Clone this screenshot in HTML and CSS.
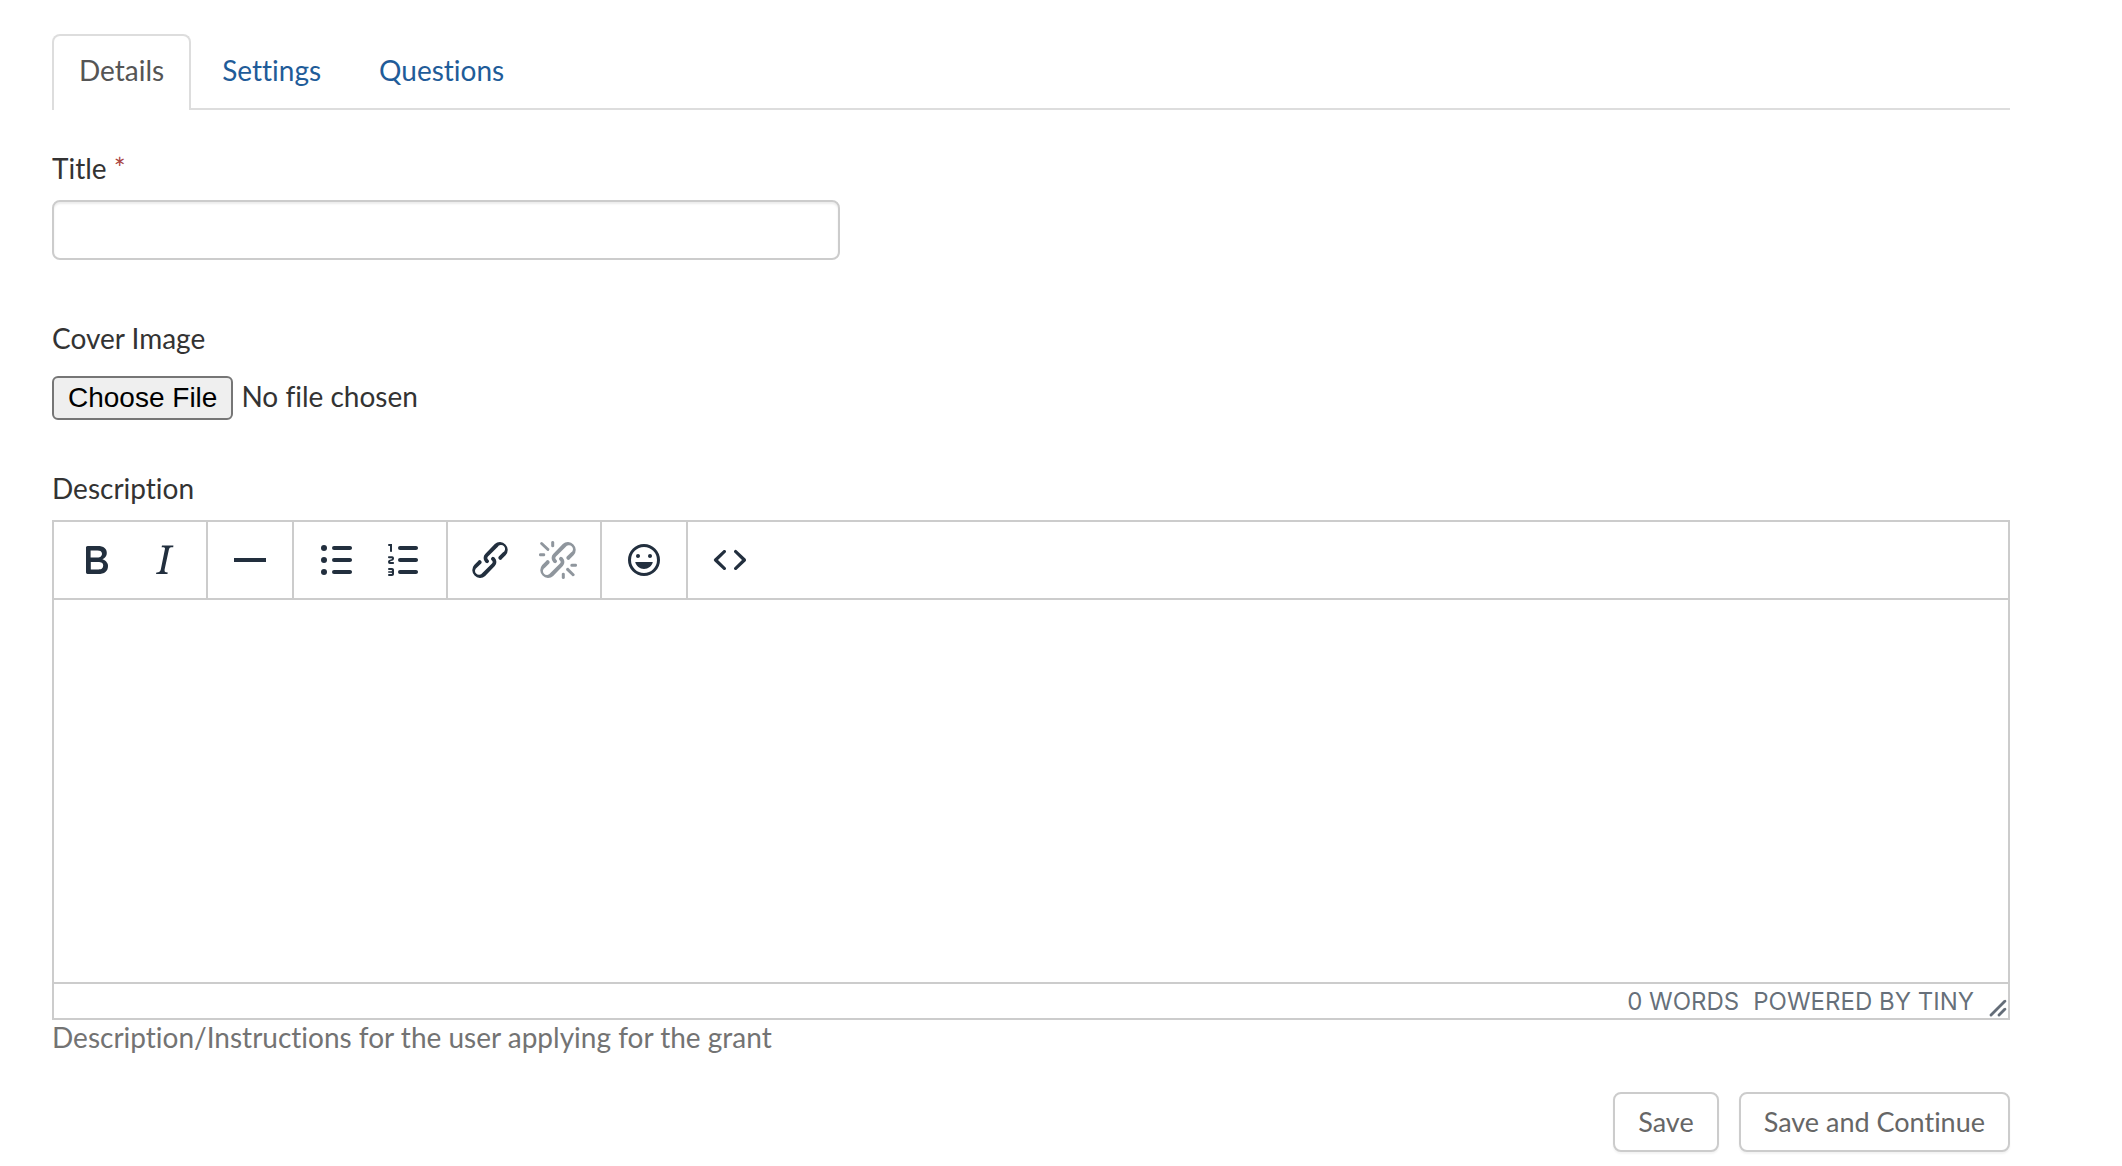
FILE: index.html
```html
<!DOCTYPE html>
<html lang="en">
<head>
  <meta charset="UTF-8" />
  <meta name="viewport" content="width=device-width, initial-scale=1.0" />
  <title>Details</title>
  <link rel="stylesheet" href="styles.css">
</head>
<body>

  <nav class="tabs">
    <a class="tab active" href="#details" aria-current="page">Details</a>
    <a class="tab" href="#settings">Settings</a>
    <a class="tab" href="#questions">Questions</a>
  </nav>

  <form>
    <div class="form-group">
      <label for="title">Title <span class="required">*</span></label>
      <input class="form-control" type="text" id="title" name="title" required />
    </div>

    <div class="form-group">
      <label for="cover">Cover Image</label>
      <input class="file-input" type="file" id="cover" name="cover" accept="image/*" />
    </div>

    <div class="form-group">
      <label for="description">Description</label>
      <div class="editor">
        <div class="toolbar" role="toolbar">
          <div class="toolbar-group">
            <button type="button" class="tool" aria-label="Bold">
              <svg viewBox="0 0 24 24"><path fill-rule="evenodd" d="M7.8 19c-.3 0-.5 0-.6-.2l-.2-.5V5.7c0-.2 0-.4.2-.5l.6-.2h5c1.5 0 2.7.3 3.5 1 .7.6 1.1 1.4 1.1 2.5a3 3 0 0 1-.6 1.9c-.4.6-1 1-1.6 1.2.4.1.9.3 1.3.6s.8.7 1 1.2c.4.4.5 1 .5 1.6 0 1.3-.4 2.3-1.3 3-.8.7-2.1 1-3.8 1H7.8Zm5-8.3c.6 0 1.2-.1 1.6-.5.4-.3.6-.7.6-1.3 0-1.1-.8-1.7-2.3-1.7H9.3v3.5h3.4Zm.5 6c.7 0 1.3-.1 1.7-.4.4-.4.6-.9.6-1.5s-.2-1-.7-1.4c-.4-.3-1-.4-2-.4H9.4v3.8h4Z"/></svg>
            </button>
            <button type="button" class="tool" aria-label="Italic">
              <svg viewBox="0 0 24 24"><path d="M16.7 4.7l-.1.9h-.3c-.6 0-1 0-1.4.3-.3.3-.4.6-.5 1.1l-2.1 9.8v.6c0 .5.4.8 1.4.8h.2l-.2.8H8l.2-.8h.2c1.1 0 1.8-.5 2-1.5l2-9.8.1-.5c0-.6-.4-.8-1.4-.8h-.3l.2-.9h5.8z"/></svg>
            </button>
          </div>
          <div class="toolbar-group">
            <button type="button" class="tool" aria-label="Horizontal line">
              <svg viewBox="0 0 24 24"><path d="M4 11h16v2H4z"/></svg>
            </button>
          </div>
          <div class="toolbar-group">
            <button type="button" class="tool" aria-label="Bullet list">
              <svg viewBox="0 0 24 24"><circle cx="6" cy="6" r="1.5"/><circle cx="6" cy="12" r="1.5"/><circle cx="6" cy="18" r="1.5"/><path d="M11 5h8c.6 0 1 .4 1 1s-.4 1-1 1h-8a1 1 0 0 1 0-2zm0 6h8c.6 0 1 .4 1 1s-.4 1-1 1h-8a1 1 0 0 1 0-2zm0 6h8c.6 0 1 .4 1 1s-.4 1-1 1h-8a1 1 0 0 1 0-2z"/></svg>
            </button>
            <button type="button" class="tool" aria-label="Numbered list">
              <svg viewBox="0 0 24 24"><path d="M10 17h8c.6 0 1 .4 1 1s-.4 1-1 1h-8a1 1 0 0 1 0-2zm0-6h8c.6 0 1 .4 1 1s-.4 1-1 1h-8a1 1 0 0 1 0-2zm0-6h8c.6 0 1 .4 1 1s-.4 1-1 1h-8a1 1 0 1 1 0-2zM6 4v3.5c0 .3-.2.5-.5.5a.5.5 0 0 1-.5-.5V5h-.5a.5.5 0 0 1 0-1H6zm-1 8.8l.2.2h1.3c.3 0 .5.2.5.5s-.2.5-.5.5H4.9a1 1 0 0 1-.9-1V13c0-.4.3-.8.6-1l1.2-.4.2-.3a.2.2 0 0 0-.2-.2H4.5a.5.5 0 0 1-.5-.5c0-.3.2-.5.5-.5h1.6c.5 0 .9.4.9 1v.1c0 .4-.3.8-.6 1l-1.2.4-.2.3zM7 17v2c0 .6-.4 1-1 1H4.5a.5.5 0 0 1 0-1h1.2c.2 0 .3-.1.3-.3 0-.2-.1-.3-.3-.3H4.4a.4.4 0 1 1 0-.8h1.3c.2 0 .3-.1.3-.3 0-.2-.1-.3-.3-.3H4.5a.5.5 0 1 1 0-1H6c.6 0 1 .4 1 1z"/></svg>
            </button>
          </div>
          <div class="toolbar-group">
            <button type="button" class="tool" aria-label="Insert link">
              <svg viewBox="0 0 24 24"><path d="M6.2 12.3a1 1 0 0 1 1.4 1.4l-2.1 2a2 2 0 1 0 2.7 2.8l4.8-4.8a1 1 0 0 0 0-1.4 1 1 0 1 1 1.4-1.3 2.9 2.9 0 0 1 0 4L9.6 20a3.9 3.9 0 0 1-5.5-5.5l2-2zm11.6-.6a1 1 0 0 1-1.4-1.4l2-2a2 2 0 1 0-2.6-2.8L11 10.3a1 1 0 0 0 0 1.4A1 1 0 1 1 9.6 13a2.9 2.9 0 0 1 0-4L14.4 4a3.9 3.9 0 0 1 5.5 5.5l-2 2z"/></svg>
            </button>
            <button type="button" class="tool" aria-label="Remove link" disabled>
              <svg viewBox="0 0 24 24"><path d="M6.2 12.3a1 1 0 0 1 1.4 1.4l-2 2a2 2 0 1 0 2.6 2.8l4.8-4.8a1 1 0 0 0 0-1.4 1 1 0 1 1 1.4-1.3 2.9 2.9 0 0 1 0 4L9.6 20a3.9 3.9 0 0 1-5.5-5.5l2-2zm11.6-.6a1 1 0 0 1-1.4-1.4l2.1-2a2 2 0 1 0-2.7-2.8L11 10.3a1 1 0 0 0 0 1.4A1 1 0 1 1 9.6 13a2.9 2.9 0 0 1 0-4L14.4 4a3.9 3.9 0 0 1 5.5 5.5l-2 2zM7.6 6.3a.8.8 0 0 1-1 1.1L3.3 4.2a.7.7 0 1 1 1-1l3.2 3.1zM5.1 8.6a.8.8 0 0 1 0 1.5H3a.8.8 0 0 1 0-1.5H5zm5-3.5a.8.8 0 0 1-1.5 0V3a.8.8 0 0 1 1.5 0V5zm6 11.8a.8.8 0 0 1 1-1l3.2 3.2a.8.8 0 0 1-1 1L16 17zm-2.2 2a.8.8 0 0 1 1.5 0V21a.8.8 0 0 1-1.5 0V19zm5-3.5a.7.7 0 1 1 0-1.5H21a.8.8 0 0 1 0 1.5H19z"/></svg>
            </button>
          </div>
          <div class="toolbar-group">
            <button type="button" class="tool" aria-label="Emojis">
              <svg viewBox="0 0 24 24"><path fill-rule="evenodd" d="M9 11c.6 0 1-.4 1-1s-.4-1-1-1a1 1 0 0 0-1 1c0 .6.4 1 1 1zm6 0c.6 0 1-.4 1-1s-.4-1-1-1a1 1 0 0 0-1 1c0 .6.4 1 1 1zm-3 5.5c2.1 0 4-1.5 4.4-3.5H7.6c.5 2 2.3 3.5 4.4 3.5zM12 4a8 8 0 1 0 0 16 8 8 0 0 0 0-16zm0 14.5a6.5 6.5 0 1 1 0-13 6.5 6.5 0 0 1 0 13z"/></svg>
            </button>
          </div>
          <div class="toolbar-group">
            <button type="button" class="tool" aria-label="Source code">
              <svg viewBox="0 0 24 24"><path d="M9.8 15.7c.3.3.3.8 0 1-.3.4-.9.4-1.2 0l-4.4-4.1a.8.8 0 0 1 0-1.2l4.4-4.2c.3-.3.9-.3 1.2 0 .3.3.3.8 0 1.1L6 12l3.8 3.7zM14.2 15.7c-.3.3-.3.8 0 1 .4.4.9.4 1.2 0l4.4-4.1c.3-.3.3-.8 0-1.2l-4.4-4.2a.8.8 0 0 0-1.2 0c-.3.3-.3.8 0 1.1L18 12l-3.8 3.7z"/></svg>
            </button>
          </div>
        </div>
        <textarea id="description" name="description"></textarea>
        <div class="statusbar">
          <span>0 words</span>
          <a href="#tiny">Powered by Tiny</a>
          <svg class="resize" viewBox="0 0 10 10"><path d="M8.1 1.1A.5.5 0 1 1 9 2l-7 7A.5.5 0 1 1 1 8l7-7zM8.1 5.1A.5.5 0 1 1 9 6l-3 3A.5.5 0 1 1 5 8l3-3z"/></svg>
        </div>
      </div>
      <p class="help">Description/Instructions for the user applying for the grant</p>
    </div>

    <div class="actions">
      <button type="submit" class="btn">Save</button>
      <button type="submit" class="btn">Save and Continue</button>
    </div>
  </form>

</body>
</html>
```

FILE: styles.css
```css
* {
  box-sizing: border-box;
}

body {
  margin: 0;
  padding: 34px 112px 14px 52px;
  font-family: Lato, sans-serif;
  font-size: 28px;
  line-height: 40px;
  font-variant-ligatures: none;
  color: #333;
  background-color: #fff;
}

.tabs {
  display: flex;
  gap: 4px;
  border-bottom: 2px solid #ddd;
  margin-bottom: 38px;
}

.tab {
  padding: 14px 25px 18px;
  border: 2px solid transparent;
  border-bottom: none;
  border-radius: 8px 8px 0 0;
  color: #1f5c99;
  text-decoration: none;
}

.tab.active {
  margin-bottom: -2px;
  padding-bottom: 20px;
  border-color: #ddd;
  background-color: #fff;
  color: #555;
}

.form-group {
  margin-bottom: 58px;
}

.form-group:nth-child(2) {
  margin-bottom: 48px;
}

.form-group:nth-child(3) {
  margin-bottom: 38px;
}

label {
  display: block;
  margin-bottom: 12px;
}

.required {
  color: #a94442;
}

.form-control {
  display: block;
  width: 100%;
  max-width: 788px;
  height: 60px;
  padding: 12px 24px;
  border: 2px solid #ccc;
  border-radius: 8px;
  font: inherit;
  box-shadow: inset 0 2px 2px rgba(0, 0, 0, 0.075);
}

.file-input {
  display: block;
  height: 46px;
  margin-top: 16px;
  font: inherit;
  line-height: 44px;
  color: #333;
}

.file-input::file-selector-button {
  height: 44px;
  margin-right: 8px;
  padding: 0 14px;
  border: 2px solid #767676;
  border-radius: 6px;
  background-color: #efefef;
  color: #000;
  font: 28px "Liberation Sans", sans-serif;
}

.editor {
  border: 2px solid #ccc;
}

.toolbar {
  display: flex;
  border-bottom: 2px solid #ccc;
}

.toolbar-group {
  display: flex;
  padding: 4px 8px;
  border-right: 2px solid #ccc;
}

.toolbar-group:last-child {
  border-right: none;
}

.tool {
  display: flex;
  align-items: center;
  justify-content: center;
  width: 68px;
  height: 68px;
  padding: 0;
  border: none;
  background: none;
  cursor: pointer;
}

.tool svg {
  width: 48px;
  height: 48px;
  fill: #222f3e;
}

.tool:disabled svg {
  opacity: 0.5;
}

textarea {
  display: block;
  width: 100%;
  height: 382px;
  padding: 20px;
  border: none;
  outline: none;
  resize: none;
  font: inherit;
}

.statusbar {
  display: flex;
  justify-content: flex-end;
  gap: 14px;
  height: 36px;
  border-top: 2px solid #ccc;
  font-family: Inter, sans-serif;
  font-size: 24px;
  line-height: 36px;
  text-transform: uppercase;
  color: rgba(34, 47, 62, 0.7);
}

.statusbar a {
  color: inherit;
  text-decoration: none;
}

.resize {
  align-self: flex-end;
  width: 20px;
  height: 20px;
  fill: rgba(34, 47, 62, 0.7);
}

.help {
  margin: 0;
  line-height: 34px;
  color: #737373;
}

.actions {
  display: flex;
  justify-content: flex-end;
  gap: 20px;
}

.btn {
  height: 60px;
  padding: 0 23px;
  border: 2px solid #ccc;
  border-radius: 8px;
  background-color: #fff;
  color: #666;
  font: inherit;
  font-size: 27px;
  line-height: 54px;
  cursor: pointer;
  box-shadow: 0 2px 2px rgba(0, 0, 0, 0.05);
}
```
